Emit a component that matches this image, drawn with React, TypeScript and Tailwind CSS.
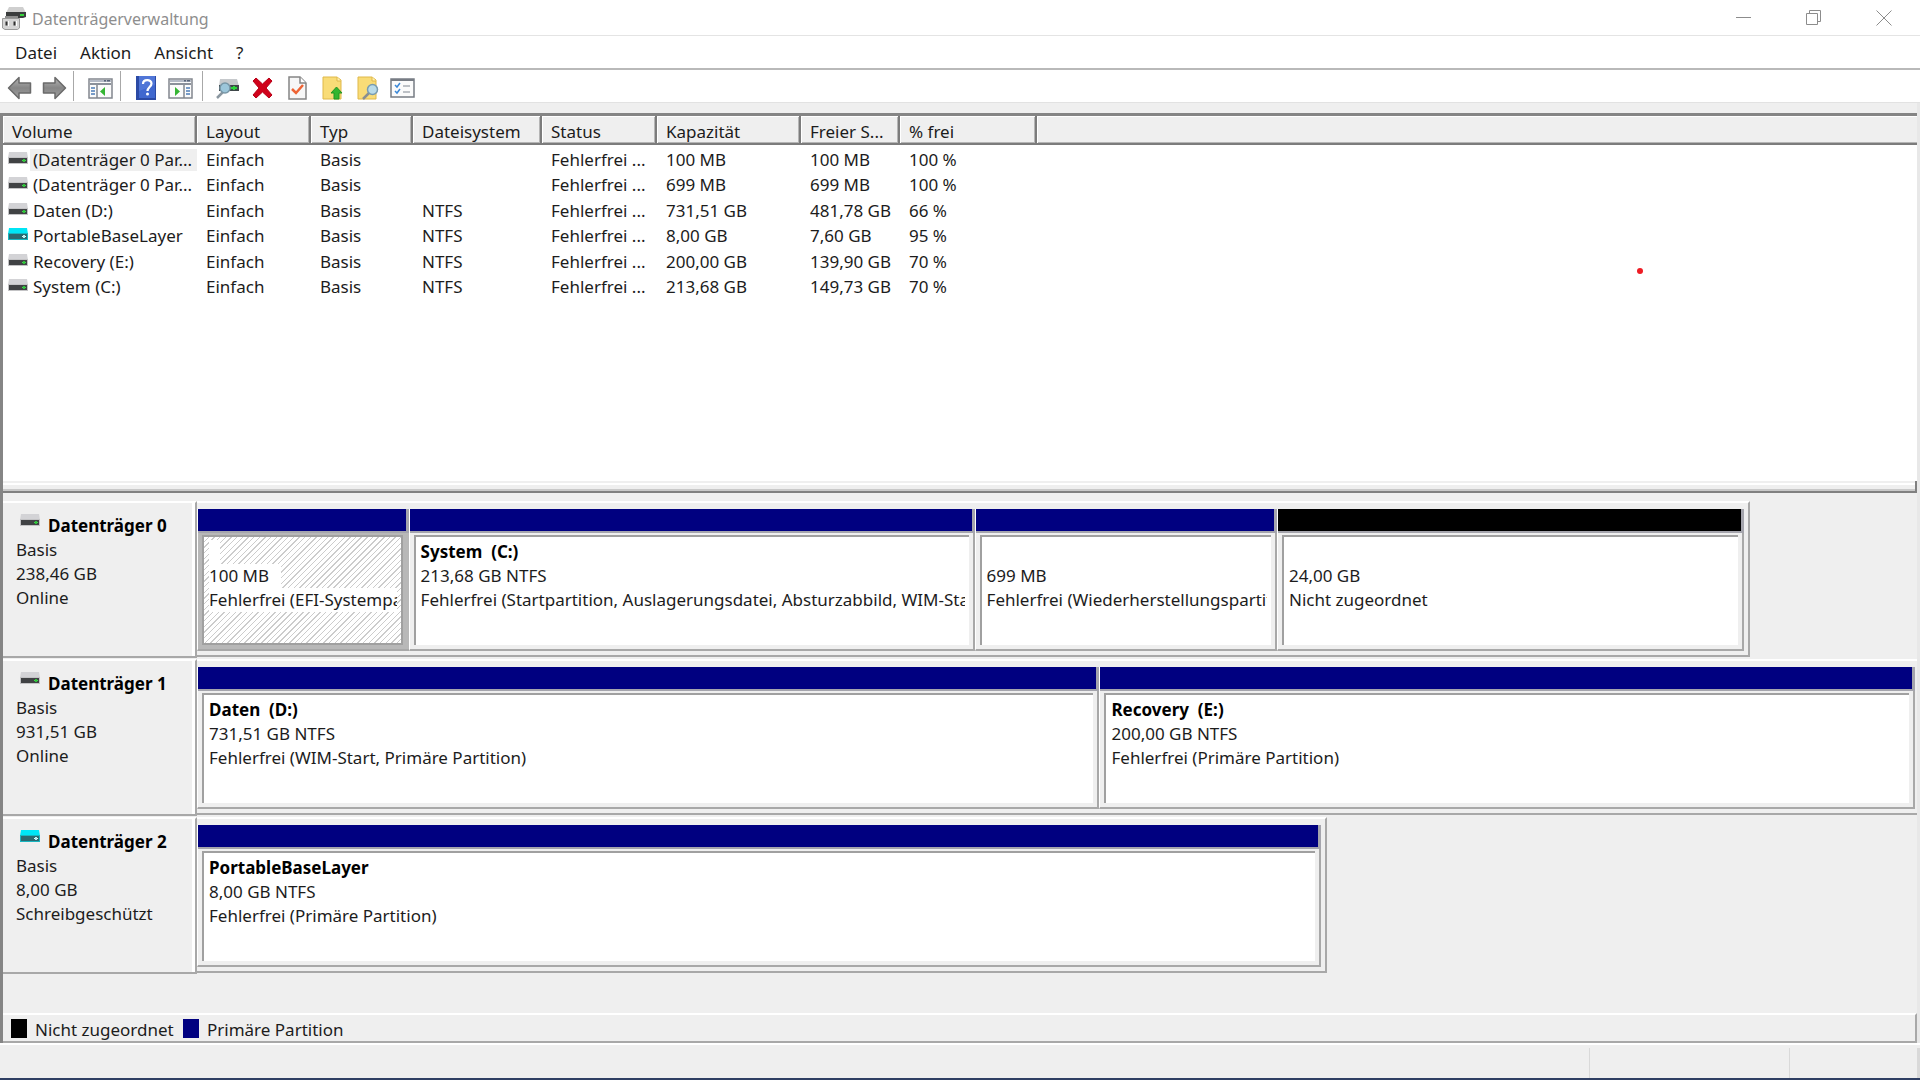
import clsx from 'clsx';
import React, { useState } from 'react';

type DriveKind = 'disk' | 'virtual';

interface IVolume {
  id: string;
  name: string;
  kind: DriveKind;
  fileSystem: string;
  capacity: string;
  free: string;
  percent: string;
}

interface IPartition {
  id: string;
  title?: string;
  size: string;
  status: string;
  share: number;
  unallocated?: boolean;
}

interface IDisk {
  name: string;
  kind: DriveKind;
  size: string;
  state: string;
  paneWidth: string;
  fillsRow?: boolean;
  partitions: IPartition[];
}

const volumes: IVolume[] = [
  { id: 'v1', name: '(Datenträger 0 Par...', kind: 'disk', fileSystem: '', capacity: '100 MB', free: '100 MB', percent: '100 %' },
  { id: 'v2', name: '(Datenträger 0 Par...', kind: 'disk', fileSystem: '', capacity: '699 MB', free: '699 MB', percent: '100 %' },
  { id: 'v3', name: 'Daten (D:)', kind: 'disk', fileSystem: 'NTFS', capacity: '731,51 GB', free: '481,78 GB', percent: '66 %' },
  { id: 'v4', name: 'PortableBaseLayer', kind: 'virtual', fileSystem: 'NTFS', capacity: '8,00 GB', free: '7,60 GB', percent: '95 %' },
  { id: 'v5', name: 'Recovery (E:)', kind: 'disk', fileSystem: 'NTFS', capacity: '200,00 GB', free: '139,90 GB', percent: '70 %' },
  { id: 'v6', name: 'System (C:)', kind: 'disk', fileSystem: 'NTFS', capacity: '213,68 GB', free: '149,73 GB', percent: '70 %' },
];

const disks: IDisk[] = [
  {
    name: 'Datenträger 0',
    kind: 'disk',
    size: '238,46 GB',
    state: 'Online',
    paneWidth: '90.3%',
    partitions: [
      { id: '0-1', size: '100 MB', status: 'Fehlerfrei (EFI-Systempartition)', share: 211 },
      {
        id: '0-2',
        title: 'System  (C:)',
        size: '213,68 GB NTFS',
        status: 'Fehlerfrei (Startpartition, Auslagerungsdatei, Absturzabbild, WIM-Start)',
        share: 566,
      },
      { id: '0-3', size: '699 MB', status: 'Fehlerfrei (Wiederherstellungspartition)', share: 302 },
      { id: '0-4', size: '24,00 GB', status: 'Nicht zugeordnet', share: 467, unallocated: true },
    ],
  },
  {
    name: 'Datenträger 1',
    kind: 'disk',
    size: '931,51 GB',
    state: 'Online',
    paneWidth: '100%',
    fillsRow: true,
    partitions: [
      { id: '1-1', title: 'Daten  (D:)', size: '731,51 GB NTFS', status: 'Fehlerfrei (WIM-Start, Primäre Partition)', share: 902 },
      { id: '1-2', title: 'Recovery  (E:)', size: '200,00 GB NTFS', status: 'Fehlerfrei (Primäre Partition)', share: 815 },
    ],
  },
  {
    name: 'Datenträger 2',
    kind: 'virtual',
    size: '8,00 GB',
    state: 'Schreibgeschützt',
    paneWidth: '65.7%',
    partitions: [
      { id: '2-1', title: 'PortableBaseLayer', size: '8,00 GB NTFS', status: 'Fehlerfrei (Primäre Partition)', share: 1 },
    ],
  },
];

const columns = [
  { label: 'Volume', width: 'w-[194px]' },
  { label: 'Layout', width: 'w-[114px]' },
  { label: 'Typ', width: 'w-[102px]' },
  { label: 'Dateisystem', width: 'w-[129px]' },
  { label: 'Status', width: 'w-[115px]' },
  { label: 'Kapazität', width: 'w-[144px]' },
  { label: 'Freier S...', width: 'w-[99px]' },
  { label: '% frei', width: 'w-[137px]' },
];

const DriveIcon: React.FC<{ kind: DriveKind }> = ({ kind }) => {
  const virtual = kind === 'virtual';
  return (
    <svg width="20" height="12" viewBox="0 0 20 12" className="shrink-0" aria-hidden="true">
      <path d="M1 0h18l1 6H0z" fill={virtual ? '#00e5f5' : '#d3d3d6'} />
      <path d="M0 5h20v7H0z" fill={virtual ? '#17b5c0' : '#c3c3c5'} />
      <path d="M1 6h18v5H1z" fill={virtual ? '#2b6970' : '#404244'} />
      <path d="M14 8h4v1h-4z" fill={virtual ? '#e8ffff' : '#3fe04a'} />
      <path d="M15 7h2v3h-2z" fill={virtual ? '#b8ecee' : '#2fc03a'} />
    </svg>
  );
};

const AppIcon = () => (
  <svg width="24" height="24" viewBox="0 0 24 24" aria-hidden="true">
    <path d="M7 1h14l3 6H4z" fill="#cfcfcf" />
    <path d="M4 6h20v5l-3 1H4z" fill="#3b3d3e" />
    <path d="M18 8h4v2h-4z" fill="#35d43c" />
    <path d="M3 10h13v2H3z" fill="#8d8d8d" />
    <path d="M.5 12.500h17V22l-2 1.500H3L.5 22z" fill="#d5d5d5" stroke="#9a9a9a" />
    <path d="M3.500 15.500h2v4h-2zM11.500 15.500h2v4h-2z" fill="#303030" />
    <path d="M6 15h1v5H6zM14 15h1v5h-1z" fill="#fff" />
  </svg>
);

const ArrowIcon: React.FC<{ flip?: boolean }> = ({ flip }) => (
  <svg width="25" height="24" viewBox="0 0 25 24" className={clsx(flip && '-scale-x-100')} aria-hidden="true">
    <defs>
      <linearGradient id={flip ? 'arrowFwd' : 'arrowBack'} x1="0" y1="0" x2="0" y2="1">
        <stop offset="0" stopColor="#b5b5b5" />
        <stop offset="0.5" stopColor="#868686" />
        <stop offset="1" stopColor="#a0a0a0" />
      </linearGradient>
    </defs>
    <path
      d="M1.500 12 12 1.500V7h11.500v10H12v5.500z"
      fill={flip ? 'url(#arrowFwd)' : 'url(#arrowBack)'}
      stroke="#6a6a6a"
      strokeWidth="1.500"
      strokeLinejoin="round"
    />
  </svg>
);

const WindowIcon: React.FC<{ right?: boolean }> = ({ right }) => (
  <svg width="25" height="21" viewBox="0 0 25 21" aria-hidden="true">
    <path d="M1 1h23v19H1z" fill="#fbfbfb" stroke="#82878f" strokeWidth="1.500" />
    <path d="M2 2h21v2H2z" fill="#b4bac6" />
    <path d="M16 2h2v1.500h-2zM19 2h3v1.500h-3z" fill="#596579" />
    <path d="M2 5h21v2H2z" fill="#8b919b" />
    {right ? (
      <>
        <path d="M16 7v13" stroke="#82878f" strokeWidth="1.500" />
        <path d="M18 10h4M18 13h4M18 16h4" stroke="#4e7db8" strokeWidth="1.500" />
        <path d="m7 9 5 4.500L7 18z" fill="#35b533" />
      </>
    ) : (
      <>
        <path d="M9 7v13" stroke="#82878f" strokeWidth="1.500" />
        <path d="M3 10h4M3 13h4M3 16h4" stroke="#4e7db8" strokeWidth="1.500" />
        <path d="m17 9-5 4.500 5 4.500z" fill="#35b533" />
      </>
    )}
  </svg>
);

const HelpIcon = () => (
  <svg width="20" height="24" viewBox="0 0 20 24" aria-hidden="true">
    <path d="M0 0h20v24H0z" fill="#2b4aa5" />
    <path d="M3 0h16v22H3z" fill="#4068cf" />
    <path d="M3 0h16v9L3 15z" fill="#5b80dc" opacity="0.600" />
    <path d="M7 8c0-5 8.500-5 8.500-.5 0 3.500-4 3.500-4 7.500" fill="none" stroke="#fff" strokeWidth="2.200" />
    <circle cx="11.500" cy="18" r="1.500" fill="#fff" />
  </svg>
);

const DriveSearchIcon = () => (
  <svg width="24" height="21" viewBox="0 0 24 21" aria-hidden="true">
    <path d="M4 1h17l2 7H3z" fill="#c6c9cc" />
    <path d="M3 7h20v6H3z" fill="#3f4749" />
    <path d="M15 9h6v2h-6zM17 8h2v4h-2z" fill="#2bd53a" />
    <path d="m1 20 6-6" stroke="#8b97a0" strokeWidth="2.500" />
    <circle cx="9" cy="10" r="5" fill="#9cc6da" stroke="#7896a6" strokeWidth="1.500" />
  </svg>
);

const DeleteIcon = () => (
  <svg width="21" height="22" viewBox="0 0 21 22" aria-hidden="true">
    <path
      d="m1 4 3-3 6.500 6L17 1l3 3-6 7 6 7-3 3-6.500-6L4 21l-3-3 6-7z"
      fill="#d0021b"
      stroke="#b80017"
      strokeLinejoin="round"
    />
  </svg>
);

const DocCheckIcon = () => (
  <svg width="19" height="24" viewBox="0 0 19 24" aria-hidden="true">
    <path d="M1 1h11l6 6v16H1z" fill="#f7f7f7" stroke="#858585" strokeWidth="1.500" />
    <path d="M12 1v6h6" fill="#fff" stroke="#858585" strokeWidth="1.500" />
    <path d="m4 13 4 4 7-8" fill="none" stroke="#ee6435" strokeWidth="2.500" />
  </svg>
);

const FolderIcon: React.FC<{ search?: boolean }> = ({ search }) => (
  <svg width="22" height="24" viewBox="0 0 22 24" aria-hidden="true">
    <path d="M1 1h14l4 3v19H1z" fill="#f9dc77" stroke="#dfb84b" />
    <path d="M15 1v4h4" fill="#fff0ae" stroke="#dfb84b" />
    {search ? (
      <>
        <path d="m6 23 6-6" stroke="#8a8f92" strokeWidth="2.500" />
        <circle cx="15.500" cy="13.500" r="5" fill="#b9dbe9" stroke="#789bb0" strokeWidth="1.500" />
      </>
    ) : (
      <path d="m14.500 11 5.500 6h-3v6h-5v-6H9z" fill="#35b52f" stroke="#239522" />
    )}
  </svg>
);

const ChecklistIcon = () => (
  <svg width="25" height="20" viewBox="0 0 25 20" aria-hidden="true">
    <path d="M1 1h23v18H1z" fill="#fbfbfb" stroke="#777c84" strokeWidth="1.500" />
    <path d="M1 1h23v2H1z" fill="#777c84" />
    <path d="m5 7 2 2 3-4M5 13l2 2 3-4" fill="none" stroke="#3b88d8" strokeWidth="1.500" />
    <path d="M13 8h7M13 14h7" stroke="#a9aeb5" strokeWidth="1.500" />
  </svg>
);

const ToolButton: React.FC<{ label: string; children: React.ReactNode }> = ({ label, children }) => (
  <button type="button" aria-label={label} className="flex w-[35px] items-center justify-center pt-1">
    {children}
  </button>
);

const ToolSeparator = () => <div className="h-[30px] w-px bg-[#a8a8a8]" />;

const TitleBar = () => (
  <header className="flex h-9 items-center border-b border-[#e4e4e4] pl-[2px]">
    <AppIcon />
    <h1 className="ml-[6px] flex-1 pt-[2px] text-[16px] text-[#8e8e8e]">Datenträgerverwaltung</h1>
    <div className="flex h-full pr-px text-[#8c8c8c]">
      <button type="button" aria-label="Minimieren" className="flex w-[70px] items-center justify-center">
        <svg width="16" height="16" viewBox="0 0 16 16" fill="none" stroke="currentColor">
          <path d="M0 7.500h15" />
        </svg>
      </button>
      <button type="button" aria-label="Verkleinern" className="flex w-[70px] items-center justify-center">
        <svg width="16" height="16" viewBox="0 0 16 16" fill="none" stroke="currentColor">
          <path d="M.5 3.500h11v11H.5zM3.500 3.500v-3h11v11h-3" />
        </svg>
      </button>
      <button type="button" aria-label="Schließen" className="flex w-[70px] items-center justify-center">
        <svg width="16" height="16" viewBox="0 0 16 16" fill="none" stroke="currentColor">
          <path d="m.5.5 15 15M15.500.5l-15 15" />
        </svg>
      </button>
    </div>
  </header>
);

const MenuBar = () => (
  <nav className="flex h-[34px] items-center gap-[23px] border-b-2 border-[#b9b9b9] pt-[2px] pl-[15px]">
    {['Datei', 'Aktion', 'Ansicht', '?'].map((item) => (
      <button key={item} type="button">
        {item}
      </button>
    ))}
  </nav>
);

const Toolbar = () => (
  <div className="flex h-[33px] items-center border-b border-[#e2e2e2] pl-[2px]">
    <ToolButton label="Zurück">
      <ArrowIcon />
    </ToolButton>
    <ToolButton label="Vorwärts">
      <ArrowIcon flip />
    </ToolButton>
    <div className="flex items-center gap-[9px] pr-[2px] pl-px">
      <ToolSeparator />
      <ToolButton label="Konsolenstruktur">
        <WindowIcon />
      </ToolButton>
    </div>
    <ToolSeparator />
    <div className="flex items-center pr-[4px] pl-[7px]">
      <ToolButton label="Hilfe">
        <HelpIcon />
      </ToolButton>
      <ToolButton label="Aktionsbereich">
        <WindowIcon right />
      </ToolButton>
    </div>
    <ToolSeparator />
    <div className="flex items-center pl-[7px]">
      <ToolButton label="Datenträger neu einlesen">
        <DriveSearchIcon />
      </ToolButton>
      <ToolButton label="Löschen">
        <DeleteIcon />
      </ToolButton>
      <ToolButton label="Eigenschaften">
        <DocCheckIcon />
      </ToolButton>
      <ToolButton label="Öffnen">
        <FolderIcon />
      </ToolButton>
      <ToolButton label="Durchsuchen">
        <FolderIcon search />
      </ToolButton>
      <ToolButton label="Einstellungen">
        <ChecklistIcon />
      </ToolButton>
    </div>
  </div>
);

const VolumeList = () => (
  <section className="relative h-[365px] bg-white">
    <table className="w-full table-fixed border-separate border-spacing-0 text-left">
      <thead>
        <tr className="h-[29px] bg-[#efefef]">
          {columns.map((col) => (
            <th
              key={col.label}
              className={clsx(
                'border-r-2 border-b-2 border-[#7c7c7c] pt-1 pl-[9px] font-normal whitespace-nowrap shadow-[inset_1px_1px_0_#fff,inset_-1px_-1px_0_#b5b5b5]',
                col.width,
              )}
            >
              {col.label}
            </th>
          ))}
          <th className="border-b-2 border-[#7c7c7c] shadow-[inset_1px_1px_0_#fff,inset_0_-1px_0_#b5b5b5]" />
        </tr>
      </thead>
      <tbody>
        <tr className="h-[2px]" />
        {volumes.map((vol, index) => (
          <tr key={vol.id} className="h-[25px] whitespace-nowrap odd:h-[26px]">
            <td>
              <div className="flex items-center pl-[5px]">
                <div className="-mt-1">
                  <DriveIcon kind={vol.kind} />
                </div>
                <span className={clsx('ml-[2px] flex-1 pl-[3px]', index === 0 && 'bg-[#efefef]')}>
                  {vol.name}
                </span>
              </div>
            </td>
            <td className="pl-[9px]">Einfach</td>
            <td className="pl-[9px]">Basis</td>
            <td className="pl-[9px]">{vol.fileSystem}</td>
            <td className="pl-[9px]">Fehlerfrei ...</td>
            <td className="pl-[9px]">{vol.capacity}</td>
            <td className="pl-[9px]">{vol.free}</td>
            <td className="pl-[9px]">{vol.percent}</td>
            <td />
          </tr>
        ))}
      </tbody>
    </table>
    <span className="absolute top-[152px] right-[274px] size-[6px] rounded-full bg-[#ee1c24]" />
  </section>
);

interface IPartitionProps {
  partition: IPartition;
  selected: boolean;
  onSelect: (id: string) => void;
}

const PartitionBox: React.FC<IPartitionProps> = ({ partition, selected, onSelect }) => (
  <button
    type="button"
    onClick={() => onSelect(partition.id)}
    className="flex min-w-0 basis-0 flex-col border-b-2 border-l border-b-[#a8a8a8] border-l-white text-left"
    style={{ flexGrow: partition.share }}
  >
    <span
      className={clsx(
        'h-6 w-full shrink-0 border-r-3 border-b-2 border-[#a5a5ad]',
        partition.unallocated ? 'bg-black' : 'bg-[#000080]',
      )}
    />
    <span
      className={clsx(
        'flex w-full flex-1 border-r-2 pt-[2px] pr-[4px] pb-[4px] pl-[4px]',
        selected ? 'border-[#b8b8b8] bg-[#b8b8b8]' : 'border-[#a8a8a8] bg-[#efefef]',
      )}
    >
      <span
        className={clsx(
          'flex w-full min-w-0 flex-col items-start border-t-2 border-l-2 border-[#a0a0a0] pt-[3px] pr-[4px] pl-[5px] leading-6',
          selected
            ? 'border-r-2 border-b-2 bg-[repeating-linear-gradient(135deg,#fff_0px,#fff_3px,#cccccc_3px,#cccccc_4px)]'
            : 'bg-white',
        )}
      >
        <span className="h-6 min-w-[11px] bg-white font-bold whitespace-pre text-black">{partition.title}</span>
        <span className="max-w-full bg-white pr-3 whitespace-nowrap">{partition.size}</span>
        <span className="max-w-full overflow-hidden bg-white whitespace-nowrap">{partition.status}</span>
      </span>
    </span>
  </button>
);

const DiskMap = () => {
  const [selectedId, setSelectedId] = useState('0-1');

  return (
    <section className="flex flex-1 flex-col">
      {disks.map((disk) => (
        <div key={disk.name} className="flex h-[158px] items-start">
          <div className="h-[157px] w-[194px] shrink-0 border-t-2 border-r-2 border-b-2 border-t-white border-r-[#a8a8a8] border-b-[#a8a8a8]">
            <div className="h-full border-r-3 border-white pt-[11px] pl-[13px] leading-6">
              <div className="flex items-start gap-2">
                <div className="ml-[4px]">
                  <DriveIcon kind={disk.kind} />
                </div>
                <strong className="whitespace-nowrap text-black">{disk.name}</strong>
              </div>
              <div>Basis</div>
              <div>{disk.size}</div>
              <div>{disk.state}</div>
            </div>
          </div>
          <div className="min-w-0 flex-1">
            <div
              className={clsx(
                'flex h-[156px] border-t-2 border-b-2 border-t-white border-b-[#a8a8a8] pt-[6px] pb-1',
                disk.fillsRow ? 'pr-[2px]' : 'border-r-2 border-r-[#a8a8a8] pr-1',
              )}
              style={{ width: disk.paneWidth }}
            >
              {disk.partitions.map((partition) => (
                <PartitionBox
                  key={partition.id}
                  partition={partition}
                  selected={selectedId === partition.id}
                  onSelect={setSelectedId}
                />
              ))}
            </div>
          </div>
        </div>
      ))}
    </section>
  );
};

const Legend = () => (
  <div className="flex h-[30px] items-center border-t-2 border-r-2 border-b-2 border-t-white border-r-[#a8a8a8] border-b-[#a8a8a8] pl-2">
    <span className="h-[19px] w-4 bg-black" />
    <span className="ml-2 w-[140px] pt-[3px] whitespace-nowrap">Nicht zugeordnet</span>
    <span className="ml-2 h-[19px] w-4 bg-[#000080]" />
    <span className="ml-2 pt-[3px]">Primäre Partition</span>
  </div>
);

const App = () => (
  <div
    className={
      'flex min-h-screen flex-col overflow-hidden border-b-2 border-[#2f3f63] bg-white ' +
      'font-["Noto_Sans",sans-serif] text-[17px] leading-[22px] text-[#1c1c1c]'
    }
  >
    <TitleBar />
    <MenuBar />
    <Toolbar />
    <main className="flex flex-1 flex-col border-r-3 border-[#e8e8e8] bg-[#efefef] pt-[10px]">
      <div className="flex flex-1 flex-col border-t-3 border-l-3 border-[#858585]">
        <VolumeList />
        <div className="mb-2 h-3 border-r-2 border-b-2 border-[#808080] pt-[2px]">
          <div className="h-full border-t-2 border-b-2 border-t-white border-b-[#c9c9c9]" />
        </div>
        <DiskMap />
        <Legend />
      </div>
    </main>
    <footer className="flex h-[35px] justify-end border-t-2 border-white bg-[#efefef] pt-[3px]">
      <div className="w-[200px] border-l border-[#d9d9d9]" />
      <div className="w-[131px] border-r-3 border-l border-[#d9d9d9]" />
    </footer>
  </div>
);

export default App;
